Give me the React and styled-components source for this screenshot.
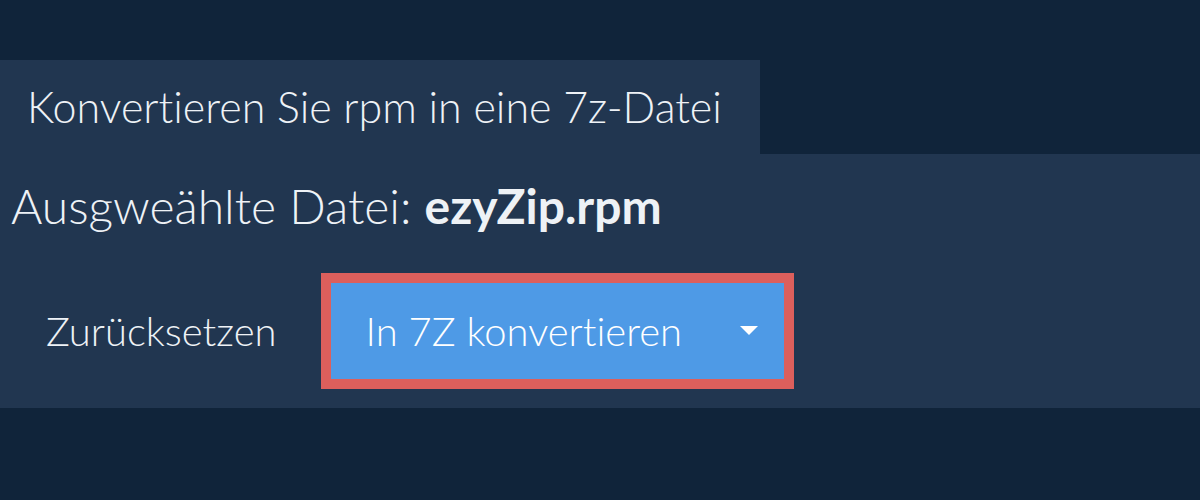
import React from "react";
import styled, { createGlobalStyle } from "styled-components";

const Global = createGlobalStyle`
  html, body { margin: 0; padding: 0; background: #10243a; }
  body {
    font-family: Lato, "Open Sans", sans-serif;
    color: #eef2f6;
    font-variant-ligatures: none;
  }
`;

const Page = styled.div`
  padding-top: 60px;
  height: 440px;
  display: flex;
  flex-direction: column;
  align-items: flex-start;
`;

const Tab = styled.div`
  width: 760px;
  height: 94px;
  box-sizing: border-box;
  background: #213650;
  display: flex;
  align-items: center;
  padding-left: 27px;
  font-size: 43px;
  font-weight: 300;
  padding-bottom: 2px;
`;

const Panel = styled.div`
  align-self: stretch;
  height: 254px;
  background: #213650;
  display: flex;
  flex-direction: column;
`;

const Selected = styled.div`
  font-size: 48px;
  font-weight: 300;
  padding-left: 11px;
  margin-top: 22px;
  line-height: 60px;
  b { font-weight: 700; }
`;

const Actions = styled.div`
  display: flex;
  align-items: center;
  margin-top: 37px;
  padding-left: 46px;
`;

const ResetButton = styled.button`
  background: none;
  border: none;
  color: #eef2f6;
  font-family: inherit;
  font-variant-ligatures: none;
  font-size: 40px;
  font-weight: 300;
  padding: 0;
  margin-right: 44px;
`;

const ConvertButton = styled.button`
  display: flex;
  align-items: center;
  box-sizing: border-box;
  width: 473px;
  height: 116px;
  background: #4e9ae6;
  border: 10px solid #dc5f5c;
  color: #ffffff;
  font-family: inherit;
  font-variant-ligatures: none;
  font-size: 40px;
  font-weight: 300;
  padding: 0 26px 0 35px;
  justify-content: space-between;
`;

const Caret = styled.span`
  width: 0;
  height: 0;
  border-left: 9px solid transparent;
  border-right: 9px solid transparent;
  border-top: 9px solid #ffffff;
  margin-bottom: 2px;
`;

export default function App() {
  return (
    <>
      <Global />
      <Page>
        <Tab>Konvertieren Sie rpm in eine 7z-Datei</Tab>
        <Panel>
          <Selected>
            Ausgweählte Datei: <b>ezyZip.rpm</b>
          </Selected>
          <Actions>
            <ResetButton>Zurücksetzen</ResetButton>
            <ConvertButton>
              <span>In 7Z konvertieren</span>
              <Caret />
            </ConvertButton>
          </Actions>
        </Panel>
      </Page>
    </>
  );
}
